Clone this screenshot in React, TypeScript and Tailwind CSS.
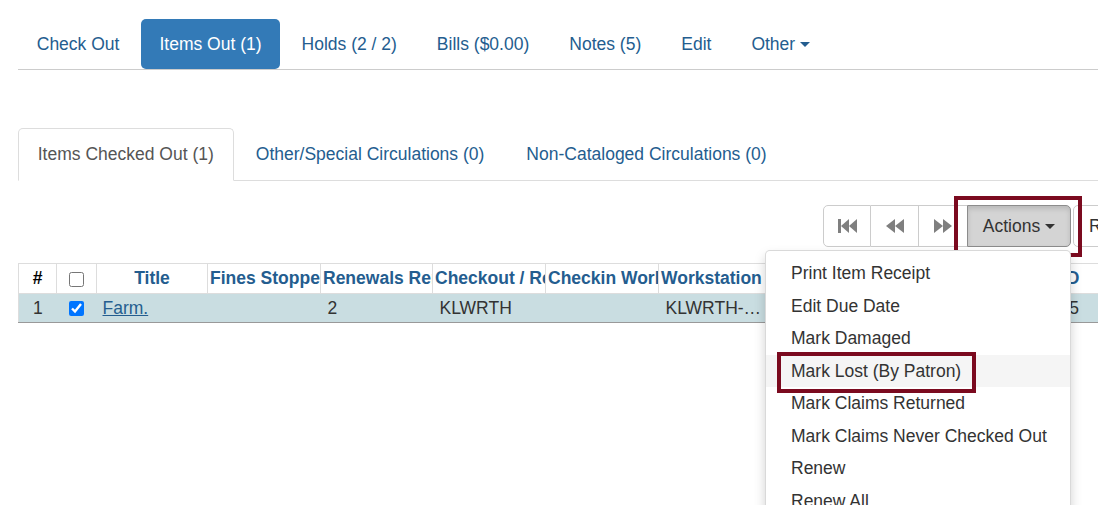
import React from 'react';

const pills = ['Check Out', 'Items Out (1)', 'Holds (2 / 2)', 'Bills ($0.00)', 'Notes (5)', 'Edit'];
const tabs = ['Items Checked Out (1)', 'Other/Special Circulations (0)', 'Non-Cataloged Circulations (0)'];
const actions = [
  'Print Item Receipt',
  'Edit Due Date',
  'Mark Damaged',
  'Mark Lost (By Patron)',
  'Mark Claims Returned',
  'Mark Claims Never Checked Out',
  'Renew',
  'Renew All',
  'Renew With Specific Due Date',
];

function Caret({ className = '' }: { className?: string }) {
  return (
    <span
      className={`inline-block w-0 h-0 ml-[5px] align-middle border-t-[5px] border-x-[5px] border-x-transparent ${className}`}
    />
  );
}

function FastBackIcon() {
  return (
    <svg width="19" height="14" viewBox="0 0 19 14" className="fill-[#7f7f7f]">
      <rect x="0" y="0" width="3" height="14" />
      <polygon points="3,7 11,0 11,14" />
      <polygon points="11,7 19,0 19,14" />
    </svg>
  );
}

function BackIcon() {
  return (
    <svg width="18" height="14" viewBox="0 0 18 14" className="fill-[#7f7f7f]">
      <polygon points="0,7 9,0 9,14" />
      <polygon points="9,7 18,0 18,14" />
    </svg>
  );
}

function ForwardIcon() {
  return (
    <svg width="18" height="14" viewBox="0 0 18 14" className="fill-[#7f7f7f]">
      <polygon points="9,7 0,0 0,14" />
      <polygon points="18,7 9,0 9,14" />
    </svg>
  );
}

export default function App() {
  return (
    <div className="w-[1098px] h-[505px] overflow-hidden bg-white text-[17.5px] leading-[25px] text-[#333] font-['Liberation_Sans',Arial,sans-serif]">
      <div className="w-[1140px] pl-[18px]">
        {/* patron nav pills */}
        <ul className="flex mt-[19px] border-b border-[#ccc]">
          {pills.map((p, i) => (
            <li key={p} className={i === 0 ? '' : 'ml-[2.5px]'}>
              <a
                className={`block px-[18.75px] py-[12.5px] rounded-[5px] ${
                  i === 1 ? 'bg-[#337ab7] text-white' : 'text-[#245d8f]'
                }`}
              >
                {p}
              </a>
            </li>
          ))}
          <li className="ml-[2.5px]">
            <a className="block px-[18.75px] py-[12.5px] text-[#245d8f]">
              Other
              <Caret className="border-t-[#245d8f]" />
            </a>
          </li>
        </ul>

        {/* circulation tabs */}
        <ul className="flex mt-[58px] border-b border-[#ddd]">
          {tabs.map((t, i) => (
            <li key={t} className="-mb-px mr-[2.5px]">
              <a
                className={`block px-[18.75px] pt-[12.5px] pb-[13.5px] border rounded-t-[5px] ${
                  i === 0
                    ? 'border-[#ddd] border-b-white bg-white text-[#555]'
                    : 'border-transparent text-[#245d8f]'
                }`}
              >
                {t}
              </a>
            </li>
          ))}
        </ul>

        {/* grid toolbar */}
        <div className="relative z-10 flex mt-[24px]">
          <div className="flex-1" />
          <div className="flex">
            <button className="w-[48px] h-[42px] flex items-center justify-center border border-[#ccc] rounded-l-[5px] bg-white">
              <FastBackIcon />
            </button>
            <button className="w-[48px] h-[42px] flex items-center justify-center border-y border-r border-[#ccc] bg-white">
              <BackIcon />
            </button>
            <button className="w-[48px] h-[42px] flex items-center justify-center border-y border-[#ccc] bg-white">
              <ForwardIcon />
            </button>
            <div className="relative">
              <button className="w-[104px] h-[42px] flex items-center justify-center border border-[#8c8c8c] rounded-r-[5px] bg-[#d4d4d4] text-[#333] shadow-[inset_0_3px_5px_rgba(0,0,0,0.125)]">
                Actions
                <Caret className="border-t-[#333]" />
              </button>
              <div className="absolute -left-[13px] -right-[11px] -top-[9px] -bottom-[10px] border-4 border-[#7b0a1f] pointer-events-none" />

              <ul className="absolute right-0 top-full mt-[3px] w-[306px] py-[6.25px] bg-white border border-[rgba(0,0,0,0.15)] rounded-[5px] shadow-[0_6px_12px_rgba(0,0,0,0.175)]">
                {actions.map((a, i) => (
                  <li key={a} className="relative">
                    <a
                      className={`block px-[25px] py-[3.75px] whitespace-nowrap text-[#333] ${
                        i === 3 ? 'bg-[#f5f5f5]' : ''
                      }`}
                    >
                      {a}
                    </a>
                    {i === 3 && (
                      <div className="absolute left-[11px] -top-[3px] w-[199px] h-[41px] border-4 border-[#7b0a1f]" />
                    )}
                  </li>
                ))}
              </ul>
            </div>
          </div>
          <button className="ml-[2px] w-[67px] h-[42px] pl-[15px] text-left border border-[#ccc] rounded-l-[5px] bg-white whitespace-nowrap overflow-hidden">
            Rows 25
          </button>
        </div>

        {/* items out grid */}
        <table className="mt-[16px] table-fixed w-[1115px] border-collapse border-l border-[#ddd]">
          <colgroup>
            <col className="w-[38px]" />
            <col className="w-[40px]" />
            <col className="w-[111px]" />
            <col className="w-[113px]" />
            <col className="w-[112px]" />
            <col className="w-[113px]" />
            <col className="w-[113px]" />
            <col className="w-[113px]" />
            <col className="w-[113px]" />
            <col className="w-[136px]" />
            <col className="w-[113px]" />
          </colgroup>
          <thead>
            <tr className="h-[30px] border-t border-b border-[#ddd] font-bold text-[#245d8f]">
              <th className="border-r border-[#ddd] text-center text-black">#</th>
              <th className="border-r border-[#ddd] text-center">
                <input type="checkbox" className="w-[15px] h-[15px] align-middle" readOnly />
              </th>
              <th className="border-r border-[#ddd] text-center">Title</th>
              {[
                'Fines Stopped',
                'Renewals Remaining',
                'Checkout / Renewal Library',
                'Checkin Workstation',
                'Workstation',
                'Due Date',
                'Barcode',
                'Circ ID',
              ].map((h) => (
                <th
                  key={h}
                  className="border-r border-[#ddd] text-left px-[2px] whitespace-nowrap overflow-hidden"
                >
                  {h}
                </th>
              ))}
            </tr>
          </thead>
          <tbody>
            <tr className="h-[29px] bg-[#c9dde1] border-b border-[#999]">
              <td className="text-center">1</td>
              <td className="text-center">
                <input type="checkbox" defaultChecked className="w-[15px] h-[15px] align-middle" />
              </td>
              <td className="px-[6px]">
                <a className="underline text-[#245d8f]">Farm.</a>
              </td>
              <td />
              <td className="px-[7px]">2</td>
              <td className="px-[7px]">KLWRTH</td>
              <td />
              <td className="pl-[7px] pr-[8px] whitespace-nowrap overflow-hidden text-ellipsis">KLWRTH-CIRC1</td>
              <td className="px-[7px] whitespace-nowrap overflow-hidden">4/18/2025</td>
              <td className="px-[7px] whitespace-nowrap overflow-hidden">31234000871</td>
              <td className="pl-[11px] whitespace-nowrap overflow-hidden">21145</td>
            </tr>
          </tbody>
        </table>
      </div>
    </div>
  );
}
